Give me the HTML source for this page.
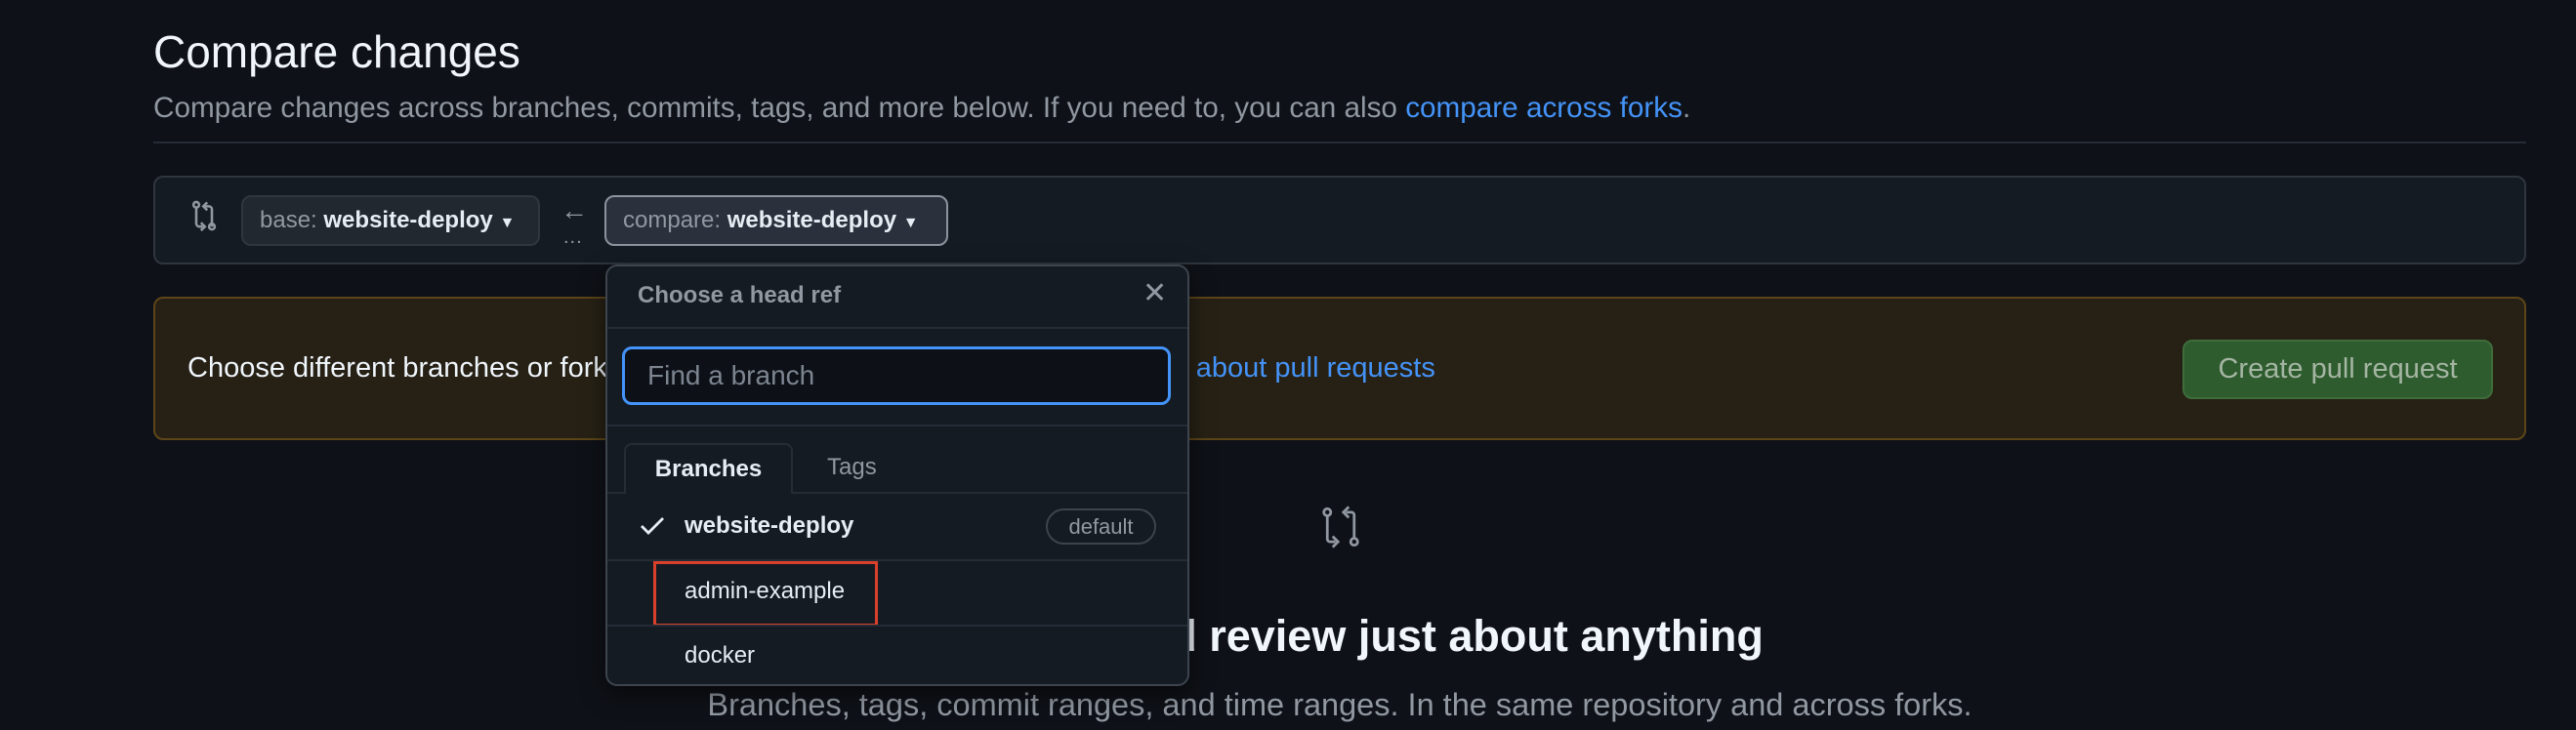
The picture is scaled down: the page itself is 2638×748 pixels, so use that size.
<!DOCTYPE html>
<html><head><meta charset="utf-8"><style>
*{box-sizing:border-box;margin:0;padding:0}
body{width:2638px;height:748px;background:#0e1117;font-family:"Liberation Sans",sans-serif;color:#e6edf3;position:relative;overflow:hidden}
.a{position:absolute;white-space:nowrap}
a{color:#4493f8;text-decoration:none}
</style></head><body>
<div class="a" style="left:157px;top:26px;font-size:46px;color:#f0f6fc">Compare changes</div>
<div class="a" style="left:157px;top:94px;font-size:29.7px;color:#9198a1">Compare changes across branches, commits, tags, and more below. If you need to, you can also <a>compare across forks</a>.</div>
<div class="a" style="left:157px;top:145px;width:2430px;height:2px;background:#262c36"></div>

<div class="a" style="left:157px;top:180px;width:2430px;height:91px;background:#151b23;border:2px solid #30363d;border-radius:10px"></div>
<svg class="a" style="left:196px;top:205px" width="26" height="32" viewBox="0 0 16 20" fill="none" stroke="#9198a1" stroke-width="1.6"><circle cx="3" cy="3" r="1.8"/><path d="M3 5v10M13 17V6a2 2 0 0 0-2-2H8M10 1.5 7.5 4 10 6.5"/><circle cx="13" cy="17" r="1.8"/><path d="M3 15a2 2 0 0 0 2 2h2M6 14.5 8.5 17 6 19.5"/></svg>
<div class="a" style="left:247px;top:200px;width:306px;height:52px;background:#212830;border:2px solid #30363d;border-radius:10px;font-size:24px;line-height:48px;padding-left:17px;color:#9198a1">base: <b style="color:#e6edf3">website-deploy</b> <span style="font-size:16px;color:#e6edf3">▼</span></div>
<div class="a" style="left:574px;top:200px;font-size:28px;color:#9198a1">←</div>
<div class="a" style="left:577px;top:232px;font-size:20px;color:#9198a1;letter-spacing:1px">...</div>
<div class="a" style="left:619px;top:200px;width:352px;height:52px;background:#2a313c;border:2px solid #8b949e;border-radius:10px;font-size:24px;line-height:48px;padding-left:17px;color:#9198a1">compare: <b style="color:#e6edf3">website-deploy</b> <span style="font-size:16px;color:#e6edf3">▼</span></div>

<div class="a" style="left:157px;top:304px;width:2430px;height:147px;background:#272115;border:2px solid #5c4518;border-radius:10px"></div>
<div class="a" style="left:192px;top:361px;font-size:29px;color:#f0f6fc">Choose different branches or forks above to discuss and review changes. Learn <a>about pull requests</a></div>
<div class="a" style="left:2235px;top:348px;width:318px;height:61px;background:#2f5c2f;border:2px solid #3e6c3b;border-radius:10px;font-size:29px;line-height:57px;text-align:center;color:#a4b5a2">Create pull request</div>

<svg class="a" style="left:1351px;top:518px" width="44" height="44" viewBox="0 0 16 16" fill="none" stroke="#9198a1" stroke-width="1"><circle cx="3" cy="2.5" r="1.3"/><path d="M3 4v8.5a1 1 0 0 0 1 1h2M5 11.5l2 2-2 2M13 12V3.5a1 1 0 0 0-1-1h-2M11 .5l-2 2 2 2"/><circle cx="13" cy="13.5" r="1.3"/></svg>
<div class="a" style="left:0;width:2744px;top:626px;text-align:center;font-size:45px;font-weight:bold;color:#f0f6fc">Compare and review just about anything</div>
<div class="a" style="left:0;width:2744px;top:704px;text-align:center;font-size:32.5px;color:#9198a1">Branches, tags, commit ranges, and time ranges. In the same repository and across forks.</div>

<div class="a" style="left:620px;top:271px;width:598px;height:432px;background:#151b23;border:2px solid #3d444d;border-radius:12px;box-shadow:0 8px 24px rgba(0,0,0,.5)"></div>
<div class="a" style="left:653px;top:289px;font-size:24px;font-weight:bold;color:#9198a1">Choose a head ref</div>
<div class="a" style="left:1170px;top:283px;font-size:30px;color:#9198a1">✕</div>
<div class="a" style="left:622px;top:335px;width:594px;height:2px;background:#262c36"></div>
<div class="a" style="left:637px;top:355px;width:562px;height:60px;background:#0d1117;border:3px solid #4493f8;border-radius:10px;font-size:28px;line-height:54px;padding-left:23px;color:#7d8590">Find a branch</div>
<div class="a" style="left:622px;top:435px;width:594px;height:2px;background:#262c36"></div>
<div class="a" style="left:622px;top:504px;width:594px;height:2px;background:#262c36"></div>
<div class="a" style="left:639px;top:454px;width:173px;height:52px;background:#151b23;border:2px solid #262c36;border-bottom:none;border-radius:8px 8px 0 0;font-size:24px;font-weight:bold;line-height:50px;text-align:center">Branches</div>
<div class="a" style="left:847px;top:465px;font-size:24px;color:#9198a1">Tags</div>
<svg class="a" style="left:655px;top:528px" width="26" height="22" viewBox="0 0 13 11" fill="none" stroke="#e6edf3" stroke-width="1.4"><path d="M1 5.5 4.5 9 12 1.5"/></svg>
<div class="a" style="left:701px;top:525px;font-size:24px;font-weight:bold">website-deploy</div>
<div class="a" style="left:1071px;top:521px;width:113px;height:37px;border:2px solid #3d444d;border-radius:20px;font-size:22px;line-height:33px;text-align:center;color:#9198a1">default</div>
<div class="a" style="left:622px;top:573px;width:594px;height:2px;background:#262c36"></div>
<div class="a" style="left:701px;top:592px;font-size:24px">admin-example</div>
<div class="a" style="left:669px;top:575px;width:230px;height:67px;border:3px solid #d9402b"></div>
<div class="a" style="left:622px;top:640px;width:594px;height:2px;background:#262c36"></div>
<div class="a" style="left:701px;top:658px;font-size:24px">docker</div>
</body></html>
